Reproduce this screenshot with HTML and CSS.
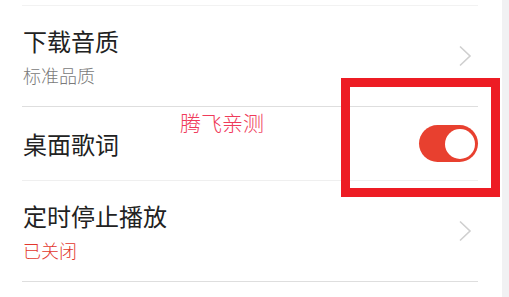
FILE: index.html
```html
<!DOCTYPE html>
<html lang="zh-CN">
<head>
    <meta charset="UTF-8">
    <meta name="viewport" content="width=device-width, initial-scale=1.0">
    <title>设置</title>
    <link rel="stylesheet" href="styles.css">
</head>
<body>
    <div class="page">
        <div class="list">
            <div class="row row-top"></div>

            <div class="row">
                <div class="row-text">
                    <div class="title">下载音质</div>
                    <div class="sub">标准品质</div>
                </div>
                <svg class="chevron" width="14" height="22" viewBox="0 0 14 22">
                    <path d="M2 1.5 L12 11 L2 20.5" fill="none" stroke="#cfcfcf" stroke-width="1.6"/>
                </svg>
            </div>

            <div class="row row-switch">
                <div class="title">桌面歌词</div>
                <div class="switch on"><span class="knob"></span></div>
            </div>

            <div class="row">
                <div class="row-text">
                    <div class="title">定时停止播放</div>
                    <div class="sub sub-red">已关闭</div>
                </div>
                <svg class="chevron" width="14" height="22" viewBox="0 0 14 22">
                    <path d="M2 1.5 L12 11 L2 20.5" fill="none" stroke="#cfcfcf" stroke-width="1.6"/>
                </svg>
            </div>
        </div>
        <div class="scrollbar"></div>
    </div>

    <div class="watermark">腾飞亲测</div>
    <div class="highlight"></div>
</body>
</html>
```

FILE: styles.css
```css
body {
    margin: 0;
    background-color: #ffffff;
    font-family: "Noto Sans CJK SC", "Noto Sans", sans-serif;
    color: #222222;
}
.page {
    display: flex;
    height: 297px;
    overflow: hidden;
}
.list {
    flex: 1;
    padding: 0 24px 0 22px;
}
.scrollbar {
    width: 7px;
    background-color: #f1f1f3;
}
.row {
    display: flex;
    align-items: center;
    justify-content: space-between;
    padding: 18px 0;
    border-bottom: 1px solid #dedede;
}
.row-top {
    height: 5px;
    padding: 0;
    border-bottom-color: #f2f2f2;
}
.row-switch {
    padding: 0;
    box-sizing: border-box;
    height: 74px;
    border-bottom-color: #efefef;
}
.title {
    font-size: 24px;
    line-height: 34px;
    padding-left: 1px;
}
.sub {
    margin-top: 4px;
    font-size: 18px;
    font-weight: 300;
    line-height: 26px;
    color: #7a7a7a;
    padding-left: 1px;
}
.sub-red {
    color: #e2362c;
}
.chevron {
    margin-right: 6px;
}
.switch {
    width: 59px;
    height: 37px;
    border-radius: 19px;
    background-color: #e8402f;
    display: flex;
    align-items: center;
    justify-content: flex-end;
    padding-right: 3px;
    box-sizing: border-box;
}
.knob {
    width: 30px;
    height: 30px;
    border-radius: 50%;
    background-color: #ffffff;
}
.watermark {
    position: absolute;
    left: 180px;
    top: 107px;
    font-size: 21px;
    font-weight: 300;
    line-height: 30px;
    color: #ef3b5a;
}
.highlight {
    position: absolute;
    left: 341px;
    top: 78px;
    width: 159px;
    height: 119px;
    box-sizing: border-box;
    border: 9px solid #ed1c24;
}
```
